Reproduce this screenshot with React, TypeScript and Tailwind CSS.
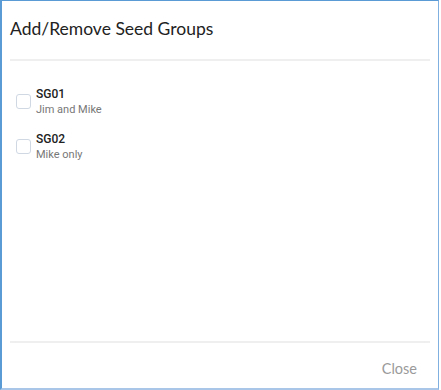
export default function App() {
  const groups = [
    { id: "SG01", desc: "Jim and Mike" },
    { id: "SG02", desc: "Mike only" },
  ];

  return (
    <div className="w-[441px] h-[390px] bg-white">
      <div className="flex h-[390px] w-[439px] flex-col border-l-2 border-t border-r border-b-2 border-l-[#5b9bd5] border-t-[#5b9bd5] border-r-[#7fb0e0] border-b-[#a9c6e8] bg-white">
        {/* header */}
        <div className="px-2 pt-[16px] pb-[18px]">
          <h1
            className="text-[17.5px] leading-[24px] text-[#222]"
            style={{ fontFamily: "Lato, 'Open Sans', sans-serif" }}
          >
            Add/Remove Seed Groups
          </h1>
        </div>
        <div className="mx-2 h-[2px] bg-[#efefef]" />

        {/* list */}
        <div
          className="flex flex-1 flex-col gap-[14px] px-[14px] pt-[26px]"
          style={{ fontFamily: "Roboto, sans-serif" }}
        >
          {groups.map((g) => (
            <label key={g.id} className="flex items-start gap-[5px]">
              <span className="mt-[7px] h-[15px] w-[15px] rounded-[3px] border border-[#cfd8e3] bg-white" />
              <span className="flex flex-col">
                <span className="text-[12px] font-medium leading-[15px] text-[#222]">{g.id}</span>
                <span className="text-[11px] leading-[16px] text-[#777]">{g.desc}</span>
              </span>
            </label>
          ))}
        </div>

        {/* footer */}
        <div className="mx-2 h-[2px] bg-[#efefef]" />
        <div className="flex h-[45px] items-center justify-end pr-[21px] pt-[6px]">
          <button
            className="text-[14.5px] text-[#9a9a9a]"
            style={{ fontFamily: "Lato, 'Open Sans', sans-serif" }}
          >
            Close
          </button>
        </div>
      </div>
    </div>
  );
}
